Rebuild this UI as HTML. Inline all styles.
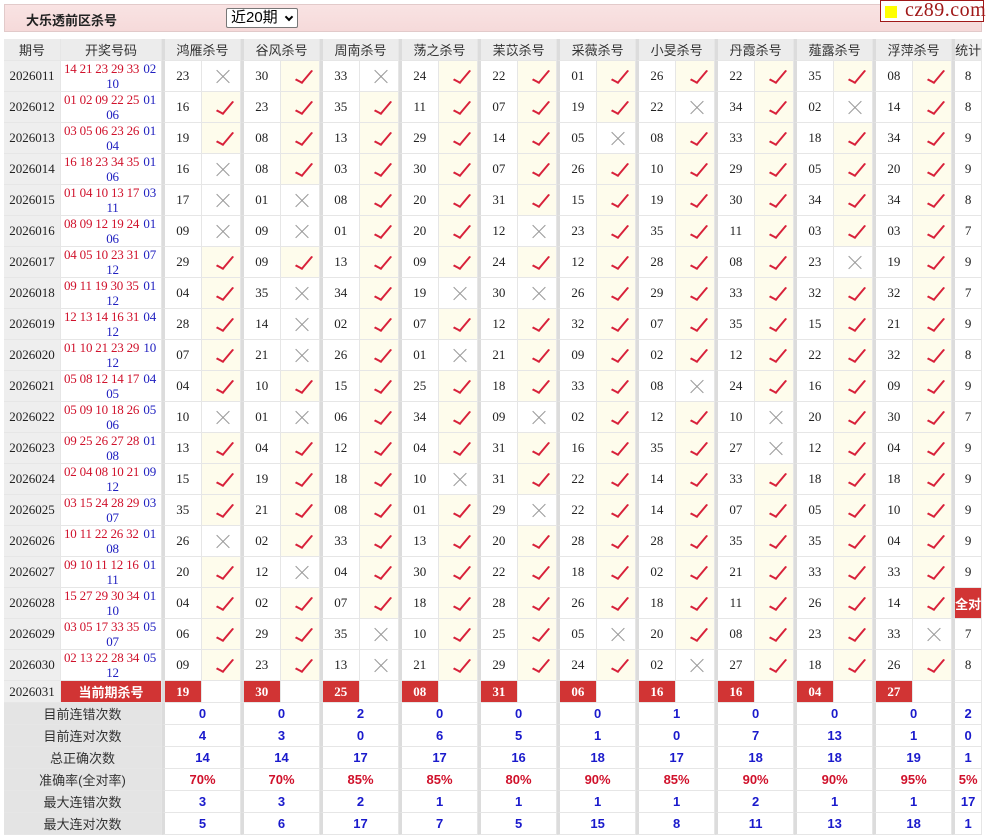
<!DOCTYPE html>
<html><head><meta charset="utf-8"><style>
*{box-sizing:border-box}
body{margin:0;background:#fff;width:986px;height:836px;overflow:hidden;font-family:"Liberation Serif","Noto Serif CJK SC",serif;position:relative}
.bar{position:absolute;left:4px;top:4px;width:978px;height:28px;background:linear-gradient(#f9e3e3,#f6dada);border:1px solid #e2caca}
.bar b{position:absolute;left:21px;top:5px;font:bold 13px "Liberation Sans","Noto Sans CJK SC",sans-serif;color:#222}
.sel{position:absolute;left:221px;top:3px;width:72px;height:20px;border:1px solid #777;border-radius:2px;background:#fff;font:15px "Liberation Sans","Noto Sans CJK SC",sans-serif;padding-left:4px;line-height:18px}
.sel i{position:absolute;right:5px;top:5px;width:6px;height:6px;border-right:2px solid #000;border-bottom:2px solid #000;transform:rotate(45deg)}
.logo{position:absolute;left:880px;top:0;width:104px;height:22px;background:#fff;border:1px solid #a01818;font:20px "Liberation Serif",serif;color:#a01818;line-height:19px;padding-left:24px;letter-spacing:.5px}
.logo:before{content:"";position:absolute;left:4px;top:5px;width:12px;height:12px;background:#ff0}
table{position:absolute;left:4px;top:39px;border-collapse:separate;border-spacing:0;table-layout:fixed;width:978px}
td{border-right:1px solid #e6e6e6;border-bottom:1px solid #e6e6e6;text-align:center;padding:0;font-size:13px;color:#222;height:31px;position:relative}
tr.h td{height:22px;background:#ececec;font-family:"Liberation Sans","Noto Sans CJK SC",sans-serif;color:#333;font-size:13px}
td.q{background:#eee;font-size:13px}
td.k{color:#d0112b;font-size:13px;line-height:15px;text-align:left;padding-left:3px;letter-spacing:-0.2px}
td.k s{text-decoration:none;color:#2020c0;float:right;padding-right:5px}
td.k u{text-decoration:none;color:#2020c0;display:block;text-align:center}
td.g{border-left:3px solid #dcdcdc}
td.y{background:#fefcec}
td.y:after{content:"";position:absolute;left:19px;top:6px;width:6px;height:15px;border-right:2px solid #d8213a;border-bottom:2px solid #d8213a;transform:rotate(40deg) skewY(-12deg)}
td.x:before,td.x:after{content:"";position:absolute;left:12px;top:15px;width:18px;height:1px;background:#999;transform:rotate(45deg)}
td.x:after{transform:rotate(-45deg)}
tr.c td{height:22px}
td.r{background:#d13434;color:#fff;font-weight:bold;font-family:"Liberation Sans","Noto Sans CJK SC",sans-serif}
td.rn{background:#d13434;color:#fff;font-weight:bold}
td.all{background:#d13434;color:#fff;font-weight:bold;font-family:"Liberation Sans","Noto Sans CJK SC",sans-serif}
tr.s td{height:22px;font:bold 13px "Liberation Sans",sans-serif;color:#1a1acc}
tr.s td.l{background:#e4e4e4;font:13px "Liberation Sans","Noto Sans CJK SC",sans-serif;color:#333}
tr.s.p td{color:#d0112b}
tr.s.p td.l{color:#333}
</style></head><body>
<div class="bar"><b>大乐透前区杀号</b><div class="sel">近20期<i></i></div></div>
<div class="logo">cz89.com</div>
<table>
<colgroup><col style="width:57px"><col style="width:101px"><col span="20" style="width:39.5px"><col style="width:30px"></colgroup>
<tr class="h"><td>期号</td><td>开奖号码</td><td class="g" colspan="2">鸿雁杀号</td><td class="g" colspan="2">谷风杀号</td><td class="g" colspan="2">周南杀号</td><td class="g" colspan="2">荡之杀号</td><td class="g" colspan="2">苿苡杀号</td><td class="g" colspan="2">采薇杀号</td><td class="g" colspan="2">小旻杀号</td><td class="g" colspan="2">丹霞杀号</td><td class="g" colspan="2">薤露杀号</td><td class="g" colspan="2">浮萍杀号</td><td class="g">统计</td></tr>
<tr><td class="q">2026011</td><td class="k">14 21 23 29 33 <s>02</s><u>10</u></td><td class="g">23</td><td class="x"></td><td class="g">30</td><td class="y"></td><td class="g">33</td><td class="x"></td><td class="g">24</td><td class="y"></td><td class="g">22</td><td class="y"></td><td class="g">01</td><td class="y"></td><td class="g">26</td><td class="y"></td><td class="g">22</td><td class="y"></td><td class="g">35</td><td class="y"></td><td class="g">08</td><td class="y"></td><td class="g">8</td></tr>
<tr><td class="q">2026012</td><td class="k">01 02 09 22 25 <s>01</s><u>06</u></td><td class="g">16</td><td class="y"></td><td class="g">23</td><td class="y"></td><td class="g">35</td><td class="y"></td><td class="g">11</td><td class="y"></td><td class="g">07</td><td class="y"></td><td class="g">19</td><td class="y"></td><td class="g">22</td><td class="x"></td><td class="g">34</td><td class="y"></td><td class="g">02</td><td class="x"></td><td class="g">14</td><td class="y"></td><td class="g">8</td></tr>
<tr><td class="q">2026013</td><td class="k">03 05 06 23 26 <s>01</s><u>04</u></td><td class="g">19</td><td class="y"></td><td class="g">08</td><td class="y"></td><td class="g">13</td><td class="y"></td><td class="g">29</td><td class="y"></td><td class="g">14</td><td class="y"></td><td class="g">05</td><td class="x"></td><td class="g">08</td><td class="y"></td><td class="g">33</td><td class="y"></td><td class="g">18</td><td class="y"></td><td class="g">34</td><td class="y"></td><td class="g">9</td></tr>
<tr><td class="q">2026014</td><td class="k">16 18 23 34 35 <s>01</s><u>06</u></td><td class="g">16</td><td class="x"></td><td class="g">08</td><td class="y"></td><td class="g">03</td><td class="y"></td><td class="g">30</td><td class="y"></td><td class="g">07</td><td class="y"></td><td class="g">26</td><td class="y"></td><td class="g">10</td><td class="y"></td><td class="g">29</td><td class="y"></td><td class="g">05</td><td class="y"></td><td class="g">20</td><td class="y"></td><td class="g">9</td></tr>
<tr><td class="q">2026015</td><td class="k">01 04 10 13 17 <s>03</s><u>11</u></td><td class="g">17</td><td class="x"></td><td class="g">01</td><td class="x"></td><td class="g">08</td><td class="y"></td><td class="g">20</td><td class="y"></td><td class="g">31</td><td class="y"></td><td class="g">15</td><td class="y"></td><td class="g">19</td><td class="y"></td><td class="g">30</td><td class="y"></td><td class="g">34</td><td class="y"></td><td class="g">34</td><td class="y"></td><td class="g">8</td></tr>
<tr><td class="q">2026016</td><td class="k">08 09 12 19 24 <s>01</s><u>06</u></td><td class="g">09</td><td class="x"></td><td class="g">09</td><td class="x"></td><td class="g">01</td><td class="y"></td><td class="g">20</td><td class="y"></td><td class="g">12</td><td class="x"></td><td class="g">23</td><td class="y"></td><td class="g">35</td><td class="y"></td><td class="g">11</td><td class="y"></td><td class="g">03</td><td class="y"></td><td class="g">03</td><td class="y"></td><td class="g">7</td></tr>
<tr><td class="q">2026017</td><td class="k">04 05 10 23 31 <s>07</s><u>12</u></td><td class="g">29</td><td class="y"></td><td class="g">09</td><td class="y"></td><td class="g">13</td><td class="y"></td><td class="g">09</td><td class="y"></td><td class="g">24</td><td class="y"></td><td class="g">12</td><td class="y"></td><td class="g">28</td><td class="y"></td><td class="g">08</td><td class="y"></td><td class="g">23</td><td class="x"></td><td class="g">19</td><td class="y"></td><td class="g">9</td></tr>
<tr><td class="q">2026018</td><td class="k">09 11 19 30 35 <s>01</s><u>12</u></td><td class="g">04</td><td class="y"></td><td class="g">35</td><td class="x"></td><td class="g">34</td><td class="y"></td><td class="g">19</td><td class="x"></td><td class="g">30</td><td class="x"></td><td class="g">26</td><td class="y"></td><td class="g">29</td><td class="y"></td><td class="g">33</td><td class="y"></td><td class="g">32</td><td class="y"></td><td class="g">32</td><td class="y"></td><td class="g">7</td></tr>
<tr><td class="q">2026019</td><td class="k">12 13 14 16 31 <s>04</s><u>12</u></td><td class="g">28</td><td class="y"></td><td class="g">14</td><td class="x"></td><td class="g">02</td><td class="y"></td><td class="g">07</td><td class="y"></td><td class="g">12</td><td class="y"></td><td class="g">32</td><td class="y"></td><td class="g">07</td><td class="y"></td><td class="g">35</td><td class="y"></td><td class="g">15</td><td class="y"></td><td class="g">21</td><td class="y"></td><td class="g">9</td></tr>
<tr><td class="q">2026020</td><td class="k">01 10 21 23 29 <s>10</s><u>12</u></td><td class="g">07</td><td class="y"></td><td class="g">21</td><td class="x"></td><td class="g">26</td><td class="y"></td><td class="g">01</td><td class="x"></td><td class="g">21</td><td class="y"></td><td class="g">09</td><td class="y"></td><td class="g">02</td><td class="y"></td><td class="g">12</td><td class="y"></td><td class="g">22</td><td class="y"></td><td class="g">32</td><td class="y"></td><td class="g">8</td></tr>
<tr><td class="q">2026021</td><td class="k">05 08 12 14 17 <s>04</s><u>05</u></td><td class="g">04</td><td class="y"></td><td class="g">10</td><td class="y"></td><td class="g">15</td><td class="y"></td><td class="g">25</td><td class="y"></td><td class="g">18</td><td class="y"></td><td class="g">33</td><td class="y"></td><td class="g">08</td><td class="x"></td><td class="g">24</td><td class="y"></td><td class="g">16</td><td class="y"></td><td class="g">09</td><td class="y"></td><td class="g">9</td></tr>
<tr><td class="q">2026022</td><td class="k">05 09 10 18 26 <s>05</s><u>06</u></td><td class="g">10</td><td class="x"></td><td class="g">01</td><td class="x"></td><td class="g">06</td><td class="y"></td><td class="g">34</td><td class="y"></td><td class="g">09</td><td class="x"></td><td class="g">02</td><td class="y"></td><td class="g">12</td><td class="y"></td><td class="g">10</td><td class="x"></td><td class="g">20</td><td class="y"></td><td class="g">30</td><td class="y"></td><td class="g">7</td></tr>
<tr><td class="q">2026023</td><td class="k">09 25 26 27 28 <s>01</s><u>08</u></td><td class="g">13</td><td class="y"></td><td class="g">04</td><td class="y"></td><td class="g">12</td><td class="y"></td><td class="g">04</td><td class="y"></td><td class="g">31</td><td class="y"></td><td class="g">16</td><td class="y"></td><td class="g">35</td><td class="y"></td><td class="g">27</td><td class="x"></td><td class="g">12</td><td class="y"></td><td class="g">04</td><td class="y"></td><td class="g">9</td></tr>
<tr><td class="q">2026024</td><td class="k">02 04 08 10 21 <s>09</s><u>12</u></td><td class="g">15</td><td class="y"></td><td class="g">19</td><td class="y"></td><td class="g">18</td><td class="y"></td><td class="g">10</td><td class="x"></td><td class="g">31</td><td class="y"></td><td class="g">22</td><td class="y"></td><td class="g">14</td><td class="y"></td><td class="g">33</td><td class="y"></td><td class="g">18</td><td class="y"></td><td class="g">18</td><td class="y"></td><td class="g">9</td></tr>
<tr><td class="q">2026025</td><td class="k">03 15 24 28 29 <s>03</s><u>07</u></td><td class="g">35</td><td class="y"></td><td class="g">21</td><td class="y"></td><td class="g">08</td><td class="y"></td><td class="g">01</td><td class="y"></td><td class="g">29</td><td class="x"></td><td class="g">22</td><td class="y"></td><td class="g">14</td><td class="y"></td><td class="g">07</td><td class="y"></td><td class="g">05</td><td class="y"></td><td class="g">10</td><td class="y"></td><td class="g">9</td></tr>
<tr><td class="q">2026026</td><td class="k">10 11 22 26 32 <s>01</s><u>08</u></td><td class="g">26</td><td class="x"></td><td class="g">02</td><td class="y"></td><td class="g">33</td><td class="y"></td><td class="g">13</td><td class="y"></td><td class="g">20</td><td class="y"></td><td class="g">28</td><td class="y"></td><td class="g">28</td><td class="y"></td><td class="g">35</td><td class="y"></td><td class="g">35</td><td class="y"></td><td class="g">04</td><td class="y"></td><td class="g">9</td></tr>
<tr><td class="q">2026027</td><td class="k">09 10 11 12 16 <s>01</s><u>11</u></td><td class="g">20</td><td class="y"></td><td class="g">12</td><td class="x"></td><td class="g">04</td><td class="y"></td><td class="g">30</td><td class="y"></td><td class="g">22</td><td class="y"></td><td class="g">18</td><td class="y"></td><td class="g">02</td><td class="y"></td><td class="g">21</td><td class="y"></td><td class="g">33</td><td class="y"></td><td class="g">33</td><td class="y"></td><td class="g">9</td></tr>
<tr><td class="q">2026028</td><td class="k">15 27 29 30 34 <s>01</s><u>10</u></td><td class="g">04</td><td class="y"></td><td class="g">02</td><td class="y"></td><td class="g">07</td><td class="y"></td><td class="g">18</td><td class="y"></td><td class="g">28</td><td class="y"></td><td class="g">26</td><td class="y"></td><td class="g">18</td><td class="y"></td><td class="g">11</td><td class="y"></td><td class="g">26</td><td class="y"></td><td class="g">14</td><td class="y"></td><td class="g all">全对</td></tr>
<tr><td class="q">2026029</td><td class="k">03 05 17 33 35 <s>05</s><u>07</u></td><td class="g">06</td><td class="y"></td><td class="g">29</td><td class="y"></td><td class="g">35</td><td class="x"></td><td class="g">10</td><td class="y"></td><td class="g">25</td><td class="y"></td><td class="g">05</td><td class="x"></td><td class="g">20</td><td class="y"></td><td class="g">08</td><td class="y"></td><td class="g">23</td><td class="y"></td><td class="g">33</td><td class="x"></td><td class="g">7</td></tr>
<tr><td class="q">2026030</td><td class="k">02 13 22 28 34 <s>05</s><u>12</u></td><td class="g">09</td><td class="y"></td><td class="g">23</td><td class="y"></td><td class="g">13</td><td class="x"></td><td class="g">21</td><td class="y"></td><td class="g">29</td><td class="y"></td><td class="g">24</td><td class="y"></td><td class="g">02</td><td class="x"></td><td class="g">27</td><td class="y"></td><td class="g">18</td><td class="y"></td><td class="g">26</td><td class="y"></td><td class="g">8</td></tr>
<tr class="c"><td class="q">2026031</td><td class="r">当前期杀号</td><td class="g rn">19</td><td></td><td class="g rn">30</td><td></td><td class="g rn">25</td><td></td><td class="g rn">08</td><td></td><td class="g rn">31</td><td></td><td class="g rn">06</td><td></td><td class="g rn">16</td><td></td><td class="g rn">16</td><td></td><td class="g rn">04</td><td></td><td class="g rn">27</td><td></td><td class="g"></td></tr>
<tr class="s"><td class="l" colspan="2">目前连错次数</td><td class="g" colspan="2">0</td><td class="g" colspan="2">0</td><td class="g" colspan="2">2</td><td class="g" colspan="2">0</td><td class="g" colspan="2">0</td><td class="g" colspan="2">0</td><td class="g" colspan="2">1</td><td class="g" colspan="2">0</td><td class="g" colspan="2">0</td><td class="g" colspan="2">0</td><td class="g">2</td></tr>
<tr class="s"><td class="l" colspan="2">目前连对次数</td><td class="g" colspan="2">4</td><td class="g" colspan="2">3</td><td class="g" colspan="2">0</td><td class="g" colspan="2">6</td><td class="g" colspan="2">5</td><td class="g" colspan="2">1</td><td class="g" colspan="2">0</td><td class="g" colspan="2">7</td><td class="g" colspan="2">13</td><td class="g" colspan="2">1</td><td class="g">0</td></tr>
<tr class="s"><td class="l" colspan="2">总正确次数</td><td class="g" colspan="2">14</td><td class="g" colspan="2">14</td><td class="g" colspan="2">17</td><td class="g" colspan="2">17</td><td class="g" colspan="2">16</td><td class="g" colspan="2">18</td><td class="g" colspan="2">17</td><td class="g" colspan="2">18</td><td class="g" colspan="2">18</td><td class="g" colspan="2">19</td><td class="g">1</td></tr>
<tr class="s p"><td class="l" colspan="2">准确率(全对率)</td><td class="g" colspan="2">70%</td><td class="g" colspan="2">70%</td><td class="g" colspan="2">85%</td><td class="g" colspan="2">85%</td><td class="g" colspan="2">80%</td><td class="g" colspan="2">90%</td><td class="g" colspan="2">85%</td><td class="g" colspan="2">90%</td><td class="g" colspan="2">90%</td><td class="g" colspan="2">95%</td><td class="g">5%</td></tr>
<tr class="s"><td class="l" colspan="2">最大连错次数</td><td class="g" colspan="2">3</td><td class="g" colspan="2">3</td><td class="g" colspan="2">2</td><td class="g" colspan="2">1</td><td class="g" colspan="2">1</td><td class="g" colspan="2">1</td><td class="g" colspan="2">1</td><td class="g" colspan="2">2</td><td class="g" colspan="2">1</td><td class="g" colspan="2">1</td><td class="g">17</td></tr>
<tr class="s"><td class="l" colspan="2">最大连对次数</td><td class="g" colspan="2">5</td><td class="g" colspan="2">6</td><td class="g" colspan="2">17</td><td class="g" colspan="2">7</td><td class="g" colspan="2">5</td><td class="g" colspan="2">15</td><td class="g" colspan="2">8</td><td class="g" colspan="2">11</td><td class="g" colspan="2">13</td><td class="g" colspan="2">18</td><td class="g">1</td></tr>
</table>
</body></html>
